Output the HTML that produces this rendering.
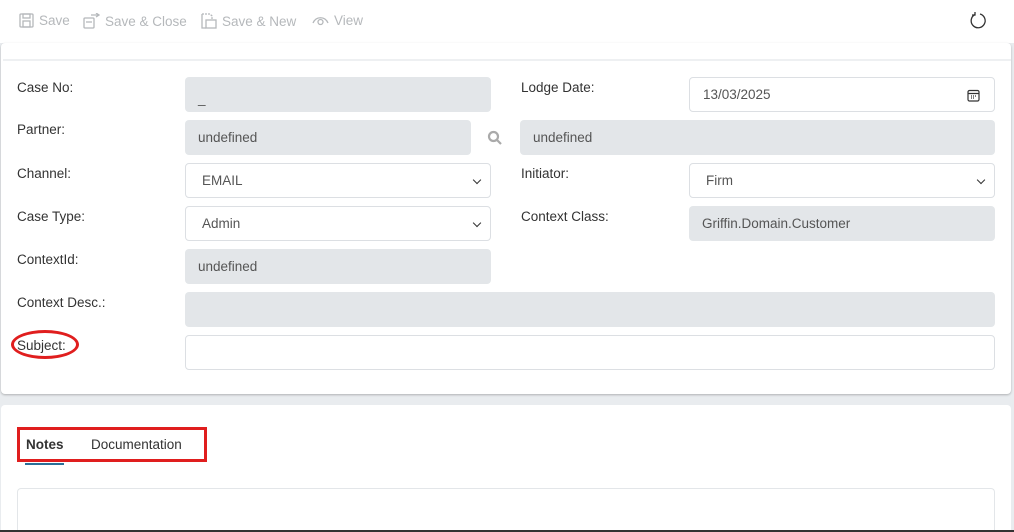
<!DOCTYPE html>
<html><head><meta charset="utf-8"><style>
*{box-sizing:border-box;margin:0;padding:0}
html{width:1014px;height:532px;overflow:hidden}
body{width:1014px;height:532px;overflow:hidden;background:#e9ecef;font-family:"Liberation Sans",sans-serif;font-size:13.5px;color:#333;position:relative}
.a{position:absolute}
.tb{left:0;top:0;width:1014px;height:43px;background:#fff}
.tbi{top:13px;color:#b5b8bb;font-size:13.5px;display:flex;align-items:center;gap:5px}
.card{background:#fff;border-radius:4px;box-shadow:0 1px 2px rgba(0,0,0,.25)}
.lbl{font-size:13.5px;color:#333}
.f{height:35px;border-radius:4px;padding-left:13px;display:flex;align-items:center;font-size:13.5px;color:#555}
.g{background:#e3e6e9}
.w{background:#fff;border:1px solid #dcdfe3}
.sel::after{content:"";position:absolute;right:10px;top:13px;width:5px;height:5px;border-right:1.6px solid #333;border-bottom:1.6px solid #333;transform:rotate(45deg)}
</style></head><body>
<div class="a tb"></div>
<div class="a tbi" style="left:19px"><svg width="15" height="15" viewBox="0 0 15 15" fill="none" stroke="#b5b8bb" stroke-width="1.3"><rect x="1" y="1" width="13" height="13" rx="1"/><rect x="4" y="1" width="7" height="4"/><rect x="4" y="8" width="7" height="6"/></svg>Save</div>
<div class="a tbi" style="left:83px"><svg width="17" height="16" viewBox="0 0 17 16" fill="none" stroke="#b5b8bb" stroke-width="1.3"><rect x="1" y="5" width="10" height="10" rx="1"/><path d="M8 2h8M13 0l3 2-3 2M3 9h6"/></svg>Save &amp; Close</div>
<div class="a tbi" style="left:201px"><svg width="16" height="16" viewBox="0 0 16 16" fill="none" stroke="#b5b8bb" stroke-width="1.3"><path d="M1 1h8l2 2v3" stroke-dasharray="2 1"/><path d="M1 1v14h4"/><rect x="5" y="7" width="10" height="8"/></svg>Save &amp; New</div>
<div class="a tbi" style="left:312px"><svg width="17" height="12" viewBox="0 0 17 12" fill="none" stroke="#b5b8bb" stroke-width="1.3"><path d="M1 8C4 1 13 1 16 8"/><circle cx="8.5" cy="7" r="2.5"/></svg>View</div>
<svg class="a" style="left:968px;top:11px" width="20" height="20" viewBox="0 0 20 20" fill="none" stroke="#333" stroke-width="1.3"><path d="M7 3.5A7 7 0 1 0 12 3"/><path d="M7 1v3H4"/></svg>

<div class="a card" style="left:1px;top:43px;width:1010px;height:351px"></div>
<div class="a" style="left:3px;top:59px;width:1008px;height:2px;background:#eef0f2"></div>

<div class="a lbl" style="left:17px;top:80px">Case No:</div>
<div class="a f g" style="left:185px;top:77px;width:306px;padding-top:8px">_</div>
<div class="a lbl" style="left:521px;top:80px">Lodge Date:</div>
<div class="a f w" style="left:689px;top:77px;width:306px">13/03/2025
<svg class="a" style="right:14px;top:11px" width="13" height="13" viewBox="0 0 13 13" fill="none" stroke="#333" stroke-width="1.2"><rect x="1" y="1.5" width="11" height="10.5" rx="1.5"/><path d="M1 4.5h11M4 7h1M6 7h1M8 7h1M4 9h1M6 9h1"/></svg></div>

<div class="a lbl" style="left:17px;top:122px">Partner:</div>
<div class="a f g" style="left:185px;top:120px;width:286px">undefined</div>
<svg class="a" style="left:487px;top:130px" width="16" height="16" viewBox="0 0 16 16" fill="none" stroke="#aaa" stroke-width="2.2"><circle cx="6.5" cy="6.5" r="4.5"/><path d="M10 10l4 4"/></svg>
<div class="a f g" style="left:520px;top:120px;width:475px">undefined</div>

<div class="a lbl" style="left:17px;top:166px">Channel:</div>
<div class="a f w sel" style="left:185px;top:163px;width:306px;padding-left:16px">EMAIL</div>
<div class="a lbl" style="left:521px;top:166px">Initiator:</div>
<div class="a f w sel" style="left:689px;top:163px;width:306px;padding-left:16px">Firm</div>

<div class="a lbl" style="left:17px;top:209px">Case Type:</div>
<div class="a f w sel" style="left:185px;top:206px;width:306px;padding-left:16px">Admin</div>
<div class="a lbl" style="left:521px;top:209px">Context Class:</div>
<div class="a f g" style="left:689px;top:206px;width:306px">Griffin.Domain.Customer</div>

<div class="a lbl" style="left:17px;top:252px">ContextId:</div>
<div class="a f g" style="left:185px;top:249px;width:306px">undefined</div>

<div class="a lbl" style="left:17px;top:295px">Context Desc.:</div>
<div class="a f g" style="left:185px;top:292px;width:810px"></div>

<div class="a lbl" style="left:17px;top:338px">Subject:</div>
<div class="a" style="left:11px;top:330px;width:68px;height:29px;border:3px solid #e01e1e;border-radius:50%"></div>
<div class="a f w" style="left:185px;top:335px;width:810px"></div>

<div class="a" style="left:1px;top:405px;width:1010px;height:125px;background:#fff;border-radius:4px 4px 0 0"></div>
<div class="a" style="left:17px;top:427px;width:190px;height:35px;border:3px solid #e01e1e"></div>
<div class="a" style="left:26px;top:437px;font-weight:bold;color:#333">Notes</div>
<div class="a" style="left:91px;top:437px;color:#333">Documentation</div>
<div class="a" style="left:25px;top:463px;width:39px;height:2px;background:#2a6f97"></div>
<div class="a" style="left:17px;top:488px;width:978px;height:42px;border:1px solid #e3e6e9;border-bottom:none;border-radius:4px 4px 0 0;background:#fff"></div>
<div class="a" style="left:0;top:530px;width:1014px;height:2px;background:#333"></div>
</body></html>
